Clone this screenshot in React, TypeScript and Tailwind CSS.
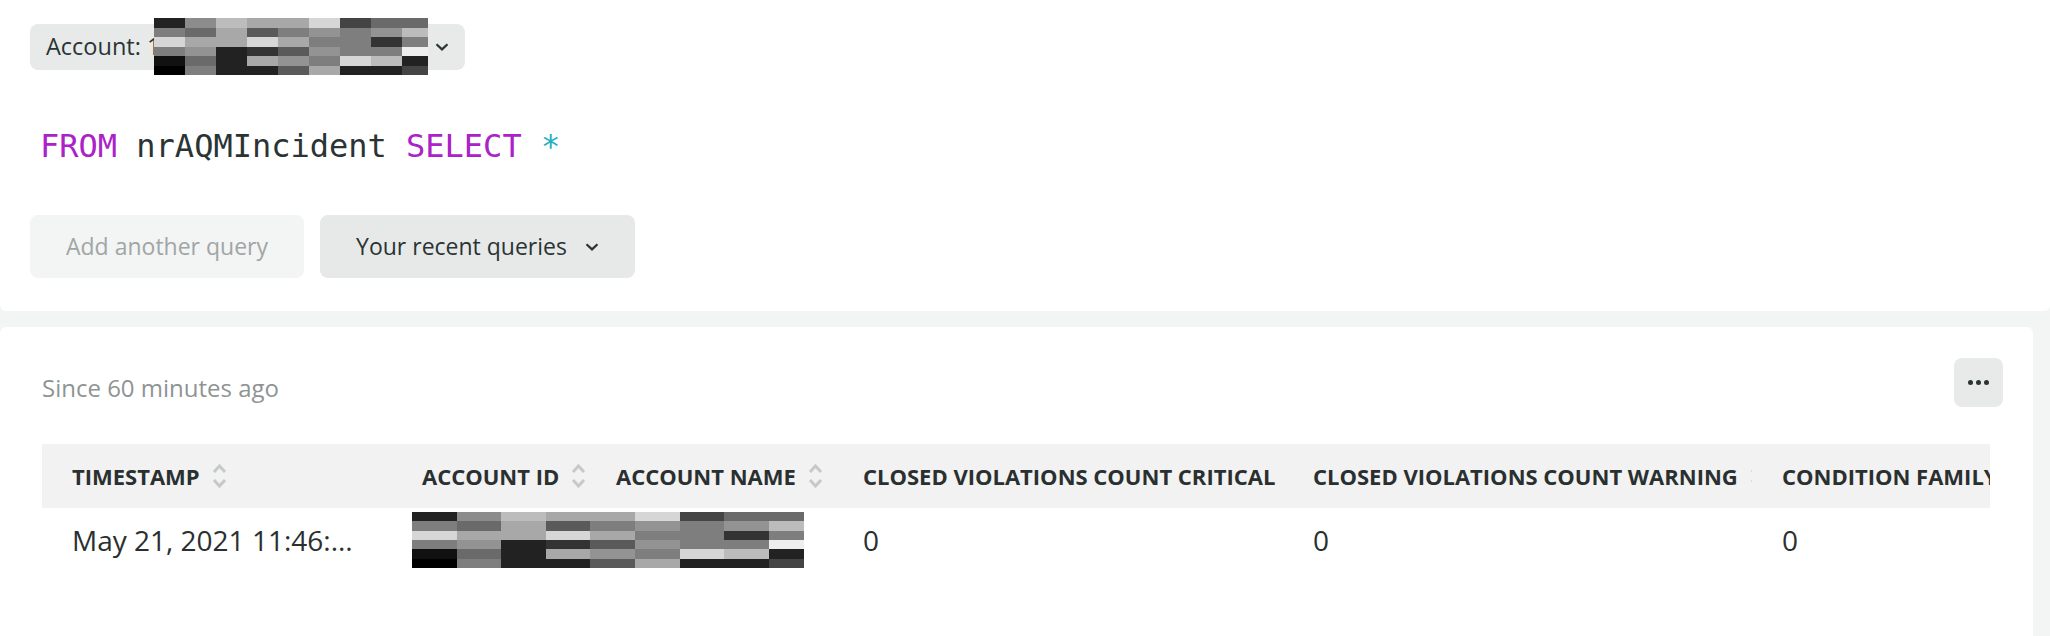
import React from "react";

const mosaic = [
  ["#222222", "#8c8c8c", "#bcbcbc", "#a8a8a8", "#a8a8a8", "#d6d6d6", "#444444", "#6a6a6a", "#6a6a6a"],
  ["#7e7e7e", "#6a6a6a", "#a8a8a8", "#5a5a5a", "#7e7e7e", "#939393", "#7e7e7e", "#939393", "#bcbcbc"],
  ["#d6d6d6", "#a8a8a8", "#a8a8a8", "#d6d6d6", "#a8a8a8", "#7e7e7e", "#7e7e7e", "#333333", "#7e7e7e"],
  ["#7e7e7e", "#939393", "#222222", "#333333", "#5a5a5a", "#939393", "#7e7e7e", "#7e7e7e", "#eeeeee"],
  ["#111111", "#6a6a6a", "#222222", "#a8a8a8", "#939393", "#7e7e7e", "#d6d6d6", "#bcbcbc", "#222222"],
  ["#000000", "#7e7e7e", "#222222", "#222222", "#5a5a5a", "#a8a8a8", "#222222", "#222222", "#444444"],
];

function Mosaic({ cell, last, rowH }: { cell: number; last: number; rowH: number }) {
  return (
    <div className="flex w-max shrink-0 flex-col">
      {mosaic.map((row, r) => (
        <div key={r} className="flex">
          {row.map((c, i) => (
            <div
              key={i}
              className="shrink-0"
              style={{ background: c, width: i === row.length - 1 ? last : cell, height: rowH }}
            />
          ))}
        </div>
      ))}
    </div>
  );
}

function Chevron() {
  return (
    <svg width="14" height="8" viewBox="0 0 14 8" fill="none">
      <path d="M1.5 1.2 L7 6.4 L12.5 1.2" stroke="#2a3434" strokeWidth="2.2" />
    </svg>
  );
}

function SortIcon() {
  return (
    <svg width="15" height="26" viewBox="0 0 15 26" fill="none" className="shrink-0">
      <path d="M2 9 L7.5 3 L13 9" stroke="#c6c9c9" strokeWidth="3" />
      <path d="M2 17 L7.5 23 L13 17" stroke="#c6c9c9" strokeWidth="3" />
    </svg>
  );
}

const cols = [
  { label: "TIMESTAMP", w: "w-[350px]" },
  { label: "ACCOUNT ID", w: "w-[194px]" },
  { label: "ACCOUNT NAME", w: "w-[247px]" },
  { label: "CLOSED VIOLATIONS COUNT CRITICAL", w: "w-[450px]" },
  { label: "CLOSED VIOLATIONS COUNT WARNING", w: "w-[469px]" },
  { label: "CONDITION FAMILY ID", w: "w-[300px]" },
];

export default function App() {
  return (
    <div className="min-h-[636px] w-[2050px] bg-[#f3f4f4] font-['Open_Sans',sans-serif]">
      <section className="h-[311px] rounded-b-md bg-white pl-[30px] pt-[24px]">
        <button
          type="button"
          className="relative flex h-[46px] w-[435px] items-center rounded-lg bg-[#e8eaea] pl-[16px] pr-[16px] text-[23.5px] text-[#2a3434]"
        >
          <span>Account: 1</span>
          <div className="absolute left-[124px] top-[-6px]">
            <Mosaic cell={31} last={26} rowH={9.5} />
          </div>
          <span className="ml-auto">
            <Chevron />
          </span>
        </button>

        <div className="mt-[56px] pl-[10px] font-['DejaVu_Sans_Mono',monospace] text-[32px] leading-[40px] text-[#2a3434]">
          <span className="text-[#aa22c8]">FROM</span> nrAQMIncident{" "}
          <span className="text-[#aa22c8]">SELECT</span> <span className="text-[#22b0bf]">*</span>
        </div>

        <div className="mt-[49px] flex gap-[16px]">
          <button
            type="button"
            className="flex h-[63px] w-[274px] items-center justify-center rounded-lg bg-[#f3f4f4] text-[23px] text-[#a0a6a6]"
          >
            Add another query
          </button>
          <button
            type="button"
            className="flex h-[63px] w-[315px] items-center justify-center gap-[18px] rounded-lg bg-[#e7e9e9] text-[23px] text-[#2a3434]"
          >
            Your recent queries
            <Chevron />
          </button>
        </div>
      </section>

      <section className="mt-[16px] h-[309px] w-[2033px] rounded-t-md bg-white pl-[42px] pr-[30px] pt-[31px]">
        <div className="flex items-start justify-between">
          <span className="mt-[14px] text-[24px] leading-[32px] text-[#8e9494]">Since 60 minutes ago</span>
          <button
            type="button"
            className="flex h-[49px] w-[49px] items-center justify-center gap-[3.5px] rounded-lg bg-[#e8eaea]"
          >
            <span className="h-[4.5px] w-[4.5px] rounded-full bg-[#2a3434]" />
            <span className="h-[4.5px] w-[4.5px] rounded-full bg-[#2a3434]" />
            <span className="h-[4.5px] w-[4.5px] rounded-full bg-[#2a3434]" />
          </button>
        </div>

        <div className="mt-[37px] w-[1948px] overflow-hidden">
          <div className="flex h-[64px] w-max bg-[#f2f2f2]">
            {cols.map((c) => (
              <div
                key={c.label}
                className={`${c.w} flex shrink-0 items-center gap-[12px] overflow-hidden pl-[30px] text-[22px] font-bold whitespace-nowrap text-[#2a2f30]`}
              >
                <span>{c.label}</span>
                <SortIcon />
              </div>
            ))}
          </div>
          <div className="flex h-[64px] w-max items-center text-[28px] text-[#2a2f30]">
            <div className="w-[350px] shrink-0 pl-[30px] whitespace-nowrap">May 21, 2021 11:46:...</div>
            <div className="w-[194px] shrink-0 pl-[20px]">
              <Mosaic cell={44.6} last={35} rowH={9.4} />
            </div>
            <div className="w-[247px] shrink-0" />
            <div className="w-[450px] shrink-0 pl-[30px]">0</div>
            <div className="w-[469px] shrink-0 pl-[30px]">0</div>
            <div className="w-[300px] shrink-0 pl-[30px]">0</div>
          </div>
        </div>
      </section>
    </div>
  );
}
